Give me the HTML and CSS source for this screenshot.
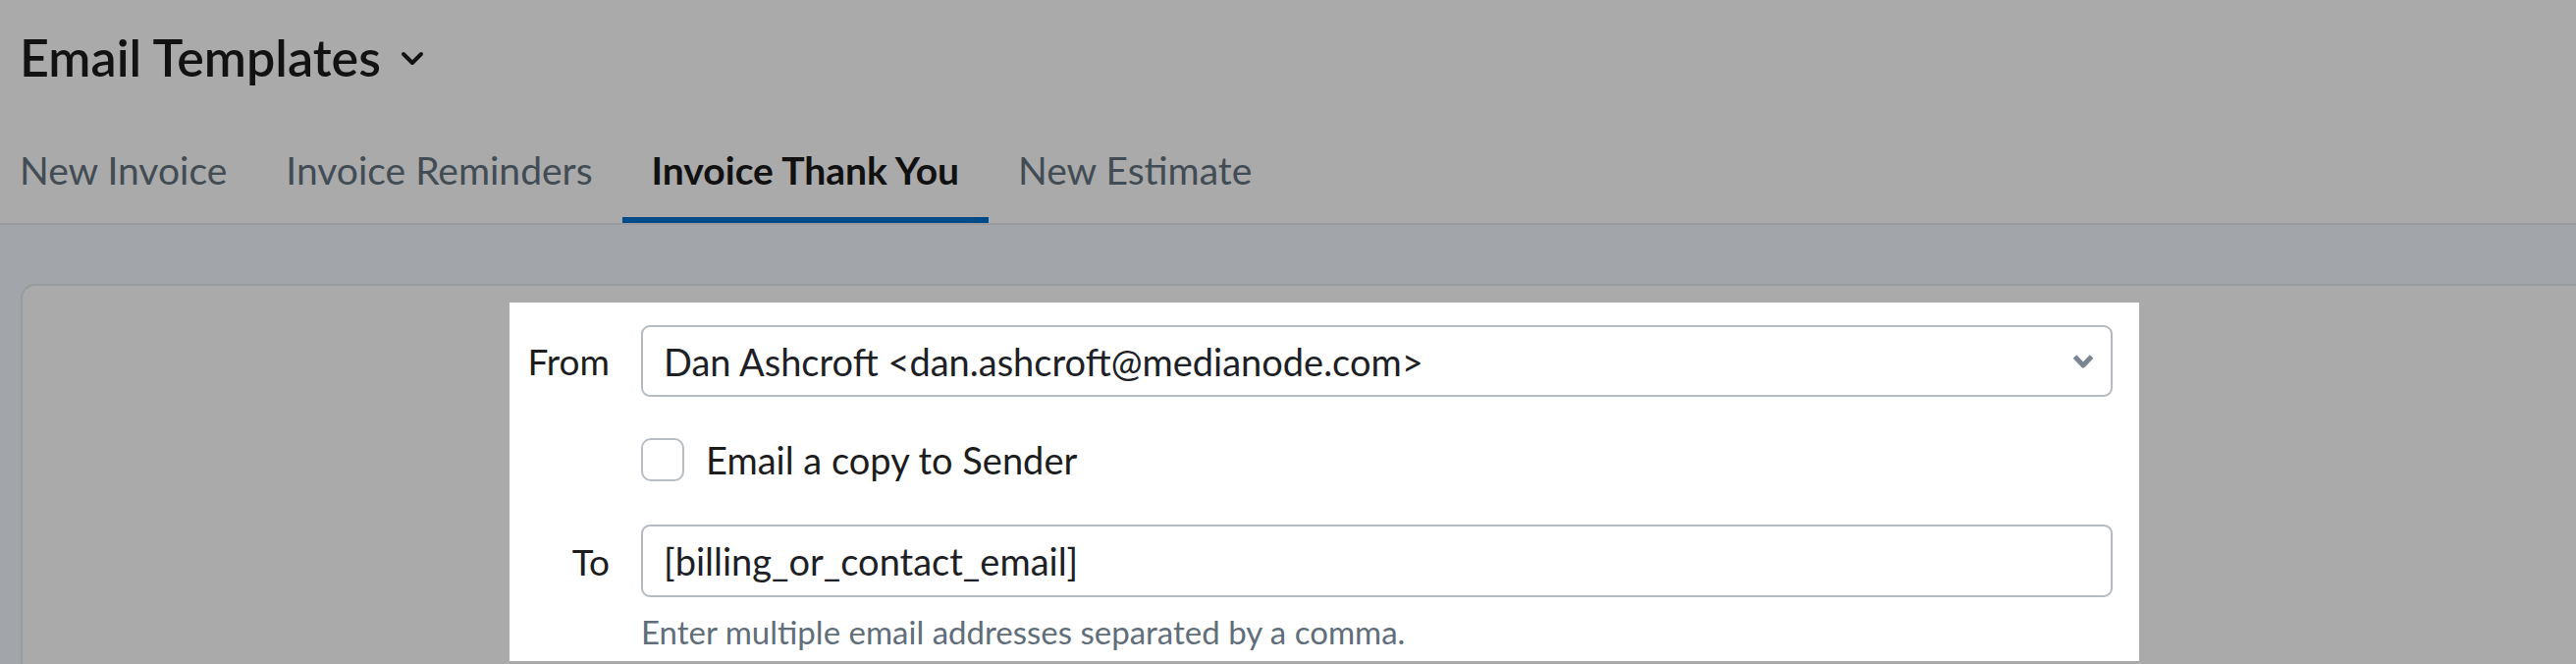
FILE: index.html
```html
<!DOCTYPE html>
<html lang="en">

<head>
    <meta charset="UTF-8">
    <meta name="viewport" content="width=device-width, initial-scale=1.0">
    <title>Email Templates</title>
    <link rel="stylesheet" href="styles.css">
</head>

<body>
    <header class="page-header">
        <h1 class="page-title">
            Email Templates
            <svg class="title-caret" width="24" height="15" viewBox="0 0 24 15">
                <path d="M3 3l9 9 9-9" fill="none" stroke="currentColor" stroke-width="4" stroke-linecap="round" stroke-linejoin="round" />
            </svg>
        </h1>
        <nav class="tabs">
            <a class="tab" href="#">New Invoice</a>
            <a class="tab" href="#">Invoice Reminders</a>
            <a class="tab active" href="#">Invoice Thank You</a>
            <a class="tab" href="#">New Estimate</a>
        </nav>
    </header>

    <main class="content">
        <section class="card">
            <form class="composer">
                <label class="field-label" for="from">From</label>
                <div class="select-wrap">
                    <select id="from" class="field">
                        <option>Dan Ashcroft &lt;dan.ashcroft@medianode.com&gt;</option>
                    </select>
                    <svg class="select-caret" width="24" height="18" viewBox="0 0 24 18">
                        <path d="M3.5 4l8.5 9 8.5-9" fill="none" stroke="currentColor" stroke-width="5" stroke-linejoin="round" />
                    </svg>
                </div>

                <div class="check-row">
                    <input type="checkbox" id="copy" class="checkbox">
                    <label for="copy">Email a copy to Sender</label>
                </div>

                <label class="field-label to-label" for="to">To</label>
                <input type="text" id="to" class="field to-field" value="[billing_or_contact_email]">
                <p class="hint">Enter multiple email addresses separated by a comma.</p>
            </form>
        </section>
    </main>

    <div class="tour-overlay"></div>
</body>

</html>
```

FILE: styles.css
```css
html,
body {
    overflow: hidden;
}

body {
    margin: 0;
    font-family: Lato, "Noto Sans", sans-serif;
    background-color: #f4f8fe;
    color: #1b1b1b;
}

.page-header {
    background: white;
    border-bottom: 2px solid #e4e8ee;
    padding: 30px 0 0 20px;
}

.page-title {
    margin: 0 0 65px 0;
    font-size: 52px;
    line-height: 56px;
    font-weight: 600;
    display: flex;
    align-items: center;
    gap: 20px;
}

.title-caret {
    margin-top: 2px;
}

.tabs {
    display: flex;
}

.tab {
    padding: 0 30px 26px 30px;
    font-size: 39px;
    line-height: 44px;
    color: #62727e;
    text-decoration: none;
    border-bottom: 6px solid transparent;
}

.tab:first-child {
    padding-left: 0;
}

.tab.active {
    color: #1a1a1a;
    font-weight: 700;
    border-bottom-color: #006fcb;
}

.content {
    padding: 60px 0 0 21px;
}

.card {
    width: 2656px;
    box-sizing: border-box;
    height: 420px;
    background: white;
    border: 2px solid #e4e8ee;
    border-radius: 15px;
    padding-top: 17px;
}

.composer {
    position: relative;
    z-index: 11;
    width: 1660px;
    box-sizing: border-box;
    margin: 0 auto;
    padding: 23px 27px 0 0;
    height: 365px;
    background: white;
    display: grid;
    grid-template-columns: 102px 1fr;
    column-gap: 32px;
    align-items: center;
    align-content: start;
}

.field-label {
    text-align: right;
    font-size: 37px;
    color: #1d1d1d;
}

.select-wrap {
    position: relative;
}

.field {
    display: block;
    width: 100%;
    box-sizing: border-box;
    height: 73px;
    padding: 0 21px;
    border: 2px solid #b4bac0;
    border-radius: 9px;
    background: white;
    font-family: inherit;
    font-size: 38px;
    color: #1d2126;
    appearance: none;
    outline: none;
}

.select-caret {
    position: absolute;
    right: 18px;
    top: 28px;
    color: #7a8691;
}

.check-row {
    grid-column: 2;
    margin-top: 41px;
    display: flex;
    align-items: center;
    gap: 22px;
    font-size: 38px;
    color: #1d1d1d;
}

.checkbox {
    appearance: none;
    margin: 0;
    width: 44px;
    height: 44px;
    border: 2px solid #b8bec4;
    border-radius: 10px;
    background: white;
}

.to-label,
.to-field {
    margin-top: 43px;
}

.to-field {
    height: 74px;
}

.hint {
    grid-column: 2;
    margin: 15px 0 0 0;
    font-size: 33px;
    line-height: 40px;
    color: #5f6e7a;
}

.tour-overlay {
    position: fixed;
    inset: 0;
    z-index: 10;
    background: rgba(0, 0, 0, 0.333);
}
```
